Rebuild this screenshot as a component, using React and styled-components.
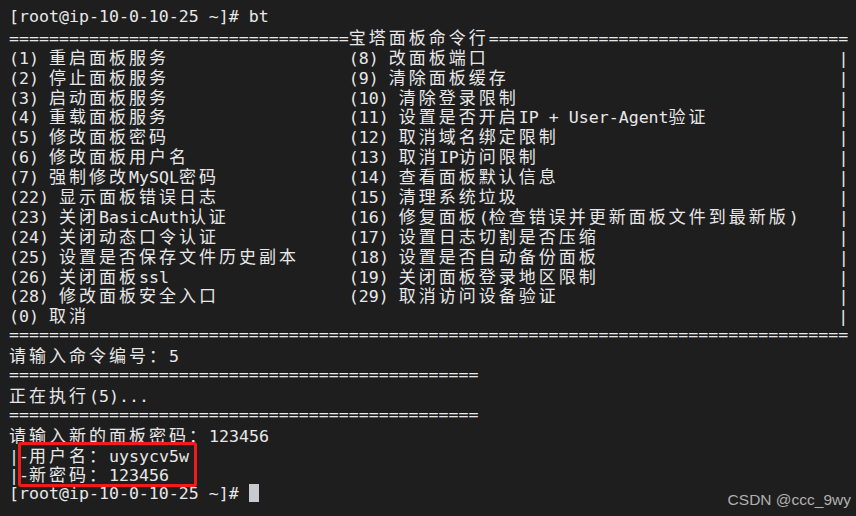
import React from "react";
import styled, { createGlobalStyle } from "styled-components";

const GlobalStyle = createGlobalStyle`
  html, body {
    margin: 0;
    padding: 0;
    background: #1e1e1e;
  }
`;

const Screen = styled.div`
  position: relative;
  width: 856px;
  height: 516px;
  overflow: hidden;
  background: #1e1e1e;
`;

const Terminal = styled.div`
  display: flex;
  flex-direction: column;
  padding: 7px 0 0 9px;
  color: #e8e8e8;
  font-family: "DejaVu Sans Mono", "Liberation Mono", monospace;
  font-size: 16.6px;
`;

const Line = styled.div`
  height: 19.9px;
  line-height: 19.9px;
  white-space: pre;
`;

const Cjk = styled.span`
  font-family: "Noto Sans CJK SC", sans-serif;
  font-size: 17px;
  letter-spacing: 3px;
`;

const Cursor = styled.span`
  display: inline-block;
  width: 10px;
  height: 18px;
  vertical-align: -3px;
  background: #c9c9d1;
`;

const Marked = styled.div`
  position: relative;
`;

const RedBox = styled.div`
  position: absolute;
  left: 9px;
  top: -3px;
  width: 179px;
  height: 45px;
  box-sizing: border-box;
  border: 3px solid #f21b1b;
  border-radius: 3px;
`;

const Watermark = styled.div`
  position: absolute;
  right: 5px;
  bottom: 7px;
  color: #b0b0b0;
  font-family: "Liberation Sans", Arial, sans-serif;
  font-size: 15.5px;
`;

const CJK_RE = /([\u3000-\u9fff\uff00-\uffef]+)/;

const cols = (s) =>
  [...s].reduce((n, ch) => n + (CJK_RE.test(ch) ? 2 : 1), 0);

const pad = (s, n) => s + " ".repeat(Math.max(0, n - cols(s)));

const Text = ({ children }) =>
  children.split(CJK_RE).map((part, i) =>
    i % 2 ? <Cjk key={i}>{part}</Cjk> : part
  );

const menu = [
  ["(1) 重启面板服务", "(8) 改面板端口"],
  ["(2) 停止面板服务", "(9) 清除面板缓存"],
  ["(3) 启动面板服务", "(10) 清除登录限制"],
  ["(4) 重载面板服务", "(11) 设置是否开启IP + User-Agent验证"],
  ["(5) 修改面板密码", "(12) 取消域名绑定限制"],
  ["(6) 修改面板用户名", "(13) 取消IP访问限制"],
  ["(7) 强制修改MySQL密码", "(14) 查看面板默认信息"],
  ["(22) 显示面板错误日志", "(15) 清理系统垃圾"],
  ["(23) 关闭BasicAuth认证", "(16) 修复面板(检查错误并更新面板文件到最新版)"],
  ["(24) 关闭动态口令认证", "(17) 设置日志切割是否压缩"],
  ["(25) 设置是否保存文件历史副本", "(18) 设置是否自动备份面板"],
  ["(26) 关闭面板ssl", "(19) 关闭面板登录地区限制"],
  ["(28) 修改面板安全入口", "(29) 取消访问设备验证"],
  ["(0) 取消", ""],
];

const PROMPT = "[root@ip-10-0-10-25 ~]# ";

const before = [
  PROMPT + "bt",
  "=".repeat(34) + "宝塔面板命令行" + "=".repeat(36),
  ...menu.map(([l, r]) => pad(pad(l, 34) + r, 83) + "|"),
  "=".repeat(84),
  "请输入命令编号：5",
  "=".repeat(47),
  "正在执行(5)...",
  "=".repeat(47),
  "请输入新的面板密码：123456",
];

const marked = ["|-用户名：uysycv5w", "|-新密码：123456"];

export default function App() {
  return (
    <Screen>
      <GlobalStyle />
      <Terminal>
        {before.map((l, i) => (
          <Line key={i}>
            <Text>{l}</Text>
          </Line>
        ))}
        <Marked>
          {marked.map((l, i) => (
            <Line key={i}>
              <Text>{l}</Text>
            </Line>
          ))}
          <RedBox />
        </Marked>
        <Line>
          {PROMPT}
          <Cursor />
        </Line>
      </Terminal>
      <Watermark>CSDN @ccc_9wy</Watermark>
    </Screen>
  );
}
